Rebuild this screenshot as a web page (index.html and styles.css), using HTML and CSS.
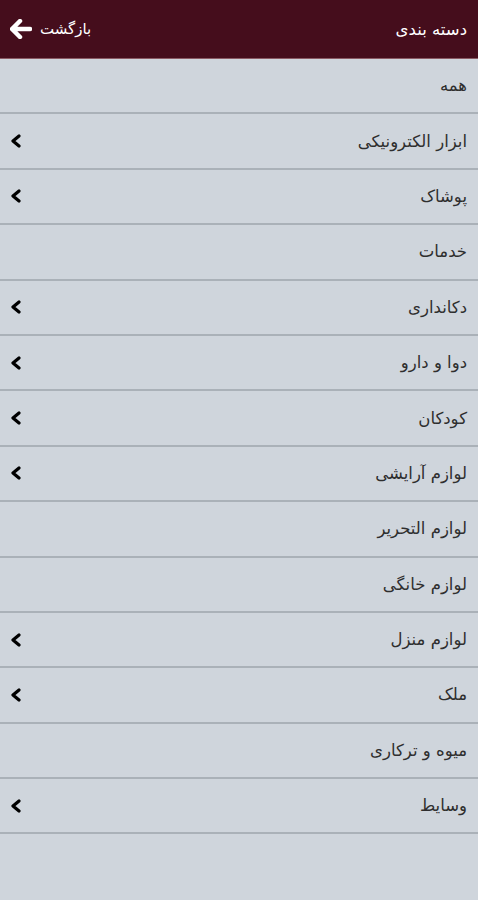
FILE: index.html
```html
<!DOCTYPE html>
<html lang="fa" dir="rtl">
<head>
  <meta charset="UTF-8" />
  <meta name="viewport" content="width=device-width, initial-scale=1.0"/>
  <title>دسته بندی</title>
  <link rel="stylesheet" href="styles.css">
</head>
<body>
  <header class="topbar">
    <span class="title">دسته بندی</span>
    <a class="back" href="#">
      <span>بازگشت</span>
      <svg width="22" height="20" viewBox="0 0 22 20"><path d="M10 2 L2 10 L10 18 M3 10 H20" fill="none" stroke="#fff" stroke-width="4.5" stroke-linecap="round" stroke-linejoin="round"/></svg>
    </a>
  </header>

  <ul class="list">
    <li class="row"><span>همه</span></li>
    <li class="row"><span>ابزار الکترونیکی</span><svg class="chev" width="11" height="14" viewBox="0 0 11 14"><path d="M9 2 L3 7 L9 12"/></svg></li>
    <li class="row"><span>پوشاک</span><svg class="chev" width="11" height="14" viewBox="0 0 11 14"><path d="M9 2 L3 7 L9 12"/></svg></li>
    <li class="row"><span>خدمات</span></li>
    <li class="row"><span>دکانداری</span><svg class="chev" width="11" height="14" viewBox="0 0 11 14"><path d="M9 2 L3 7 L9 12"/></svg></li>
    <li class="row"><span>دوا و دارو</span><svg class="chev" width="11" height="14" viewBox="0 0 11 14"><path d="M9 2 L3 7 L9 12"/></svg></li>
    <li class="row"><span>کودکان</span><svg class="chev" width="11" height="14" viewBox="0 0 11 14"><path d="M9 2 L3 7 L9 12"/></svg></li>
    <li class="row"><span>لوازم آرایشی</span><svg class="chev" width="11" height="14" viewBox="0 0 11 14"><path d="M9 2 L3 7 L9 12"/></svg></li>
    <li class="row"><span>لوازم التحریر</span></li>
    <li class="row"><span>لوازم خانگی</span></li>
    <li class="row"><span>لوازم منزل</span><svg class="chev" width="11" height="14" viewBox="0 0 11 14"><path d="M9 2 L3 7 L9 12"/></svg></li>
    <li class="row"><span>ملک</span><svg class="chev" width="11" height="14" viewBox="0 0 11 14"><path d="M9 2 L3 7 L9 12"/></svg></li>
    <li class="row"><span>میوه و ترکاری</span></li>
    <li class="row"><span>وسایط</span><svg class="chev" width="11" height="14" viewBox="0 0 11 14"><path d="M9 2 L3 7 L9 12"/></svg></li>
  </ul>
</body>
</html>
```

FILE: styles.css
```css
body {
  margin: 0;
  font-family: "DejaVu Sans", "Noto Sans", sans-serif;
  background-color: #cfd5dc;
  width: 478px;
  height: 900px;
}
.topbar {
  height: 58px;
  background-color: #450d1c;
  display: flex;
  justify-content: space-between;
  align-items: center;
  padding: 0 11px 0 10px;
  border-bottom: 1px solid #8a5a64;
  color: #fff;
}
.title {
  font-size: 16.5px;
}
.back {
  display: flex;
  align-items: center;
  gap: 8px;
  color: #fff;
  text-decoration: none;
  font-size: 15px;
}
.back svg {
  display: block;
}
.list {
  list-style: none;
  margin: 0;
  padding: 0;
}
.row {
  height: 53.4px;
  border-bottom: 2px solid #aab1b8;
  display: flex;
  align-items: center;
  justify-content: space-between;
  padding: 0 11px 0 10px;
  font-size: 16.5px;
  color: #2e2e2e;
}
.chev {
  display: block;
}
.chev path {
  fill: none;
  stroke: #000;
  stroke-width: 3.2;
  stroke-linecap: round;
  stroke-linejoin: round;
}
```
